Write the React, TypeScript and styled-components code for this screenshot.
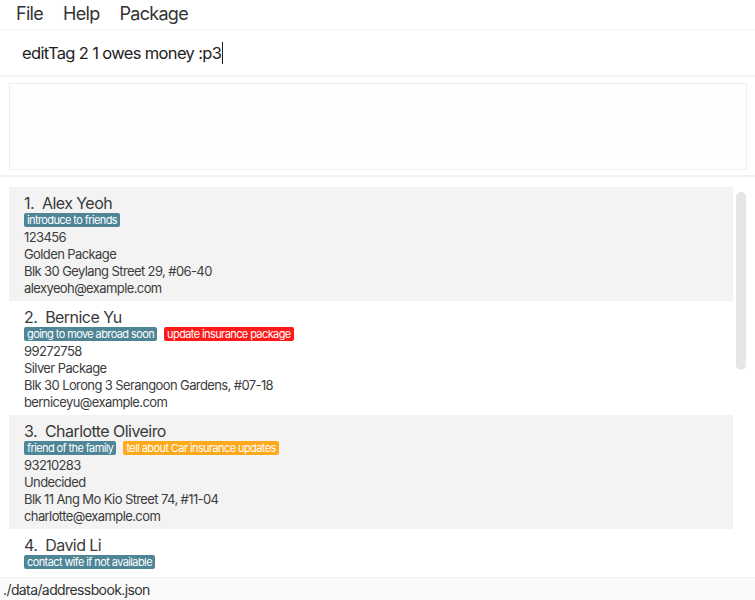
import React from "react";
import styled, { createGlobalStyle } from "styled-components";

const Global = createGlobalStyle`
  html, body { margin: 0; padding: 0; background: #ffffff; }
  body { font-family: Inter, "Open Sans", sans-serif; color: #333; }
  * { box-sizing: border-box; }
`;

const Window = styled.div`
  width: 755px;
  height: 600px;
  display: flex;
  flex-direction: column;
  overflow: hidden;
  background: #fff;
`;

const MenuBar = styled.div`
  height: 30px;
  flex-shrink: 0;
  display: flex;
  align-items: center;
  gap: 20px;
  padding-left: 16px;
  padding-bottom: 2px;
  border-bottom: 1px solid #f3f3f3;
`;

const MenuItem = styled.span`
  font-size: 18px;
  color: #333;
  letter-spacing: -0.7px;
`;

const CommandBox = styled.div`
  height: 47px;
  flex-shrink: 0;
  display: flex;
  align-items: center;
  padding-left: 22px;
  font-size: 16.5px;
  color: #222;
  letter-spacing: -0.65px;
  border-bottom: 2px solid #f2f2f2;
`;

const Caret = styled.span`
  display: inline-block;
  width: 1px;
  height: 22px;
  background: #222;
  margin-left: 1px;
`;

const ResultPane = styled.div`
  flex-shrink: 0;
  padding: 6px 8px 5px 9px;
  border-bottom: 2px solid #f2f2f2;
`;

const ResultBox = styled.div`
  height: 87px;
  border: 1px solid #eeeeee;
  background: #fefefe;
`;

const ListArea = styled.div`
  flex: 1;
  min-height: 0;
  display: flex;
  padding: 10px 0 8px 9px;
`;

const Viewport = styled.div`
  flex: 1;
  display: flex;
  overflow: hidden;
`;

const CardList = styled.div`
  width: 724px;
  display: flex;
  flex-direction: column;
`;

const Card = styled.div<{ $shade: boolean }>`
  height: 114px;
  flex-shrink: 0;
  padding: 7px 0 0 15px;
  background: ${(p) => (p.$shade ? "#f3f3f3" : "#ffffff")};
  display: flex;
  flex-direction: column;
`;

const Name = styled.div`
  font-size: 16px;
  line-height: 19px;
  color: #3a3a3a;
  white-space: pre;
  letter-spacing: -0.55px;
`;

const Tags = styled.div`
  display: flex;
  gap: 7px;
  margin-bottom: 2px;
`;

const Tag = styled.span<{ $color: string }>`
  background: ${(p) => p.$color};
  color: #fff;
  font-size: 11px;
  line-height: 14px;
  height: 14px;
  padding: 0 3px;
  border-radius: 2px;
  letter-spacing: -0.6px;
`;

const Detail = styled.div`
  font-size: 13px;
  line-height: 17px;
  color: #3c3c3c;
  letter-spacing: -0.6px;
`;

const ScrollTrack = styled.div`
  width: 16px;
  display: flex;
  justify-content: center;
  padding-top: 5px;
`;

const ScrollThumb = styled.div`
  width: 10px;
  height: 178px;
  border-radius: 5px;
  background: #e6e6e6;
`;

const StatusBar = styled.div`
  height: 23px;
  flex-shrink: 0;
  background: #fafafa;
  border-top: 1px solid #f0f0f0;
  display: flex;
  align-items: center;
  padding-left: 3px;
  font-size: 14px;
  color: #333;
  letter-spacing: -0.6px;
`;

const TEAL = "#4e8597";
const RED = "#ff1a1a";
const ORANGE = "#ffa91c";

type Person = {
  name: string;
  tags: { label: string; color: string }[];
  phone: string;
  pkg: string;
  address: string;
  email: string;
};

const people: Person[] = [
  {
    name: "Alex Yeoh",
    tags: [{ label: "introduce to friends", color: TEAL }],
    phone: "123456",
    pkg: "Golden Package",
    address: "Blk 30 Geylang Street 29, #06-40",
    email: "alexyeoh@example.com",
  },
  {
    name: "Bernice Yu",
    tags: [
      { label: "going to move abroad soon", color: TEAL },
      { label: "update insurance package", color: RED },
    ],
    phone: "99272758",
    pkg: "Silver Package",
    address: "Blk 30 Lorong 3 Serangoon Gardens, #07-18",
    email: "berniceyu@example.com",
  },
  {
    name: "Charlotte Oliveiro",
    tags: [
      { label: "friend of the family", color: TEAL },
      { label: "tell about Car insurance updates", color: ORANGE },
    ],
    phone: "93210283",
    pkg: "Undecided",
    address: "Blk 11 Ang Mo Kio Street 74, #11-04",
    email: "charlotte@example.com",
  },
  {
    name: "David Li",
    tags: [{ label: "contact wife if not available", color: TEAL }],
    phone: "91031282",
    pkg: "Bronze Package",
    address: "Blk 436 Serangoon Gardens Street 26, #16-43",
    email: "lidavid@example.com",
  },
];

export default function App() {
  return (
    <Window>
      <Global />
      <MenuBar>
        <MenuItem>File</MenuItem>
        <MenuItem>Help</MenuItem>
        <MenuItem>Package</MenuItem>
      </MenuBar>
      <CommandBox>
        editTag 2 1 owes money :p3
        <Caret />
      </CommandBox>
      <ResultPane>
        <ResultBox />
      </ResultPane>
      <ListArea>
        <Viewport>
          <CardList>
            {people.map((p, i) => (
              <Card key={p.name} $shade={i % 2 === 0}>
                <Name>{`${i + 1}.  ${p.name}`}</Name>
                <Tags>
                  {p.tags.map((t) => (
                    <Tag key={t.label} $color={t.color}>
                      {t.label}
                    </Tag>
                  ))}
                </Tags>
                <Detail>{p.phone}</Detail>
                <Detail>{p.pkg}</Detail>
                <Detail>{p.address}</Detail>
                <Detail>{p.email}</Detail>
              </Card>
            ))}
          </CardList>
          <ScrollTrack>
            <ScrollThumb />
          </ScrollTrack>
        </Viewport>
      </ListArea>
      <StatusBar>./data/addressbook.json</StatusBar>
    </Window>
  );
}
